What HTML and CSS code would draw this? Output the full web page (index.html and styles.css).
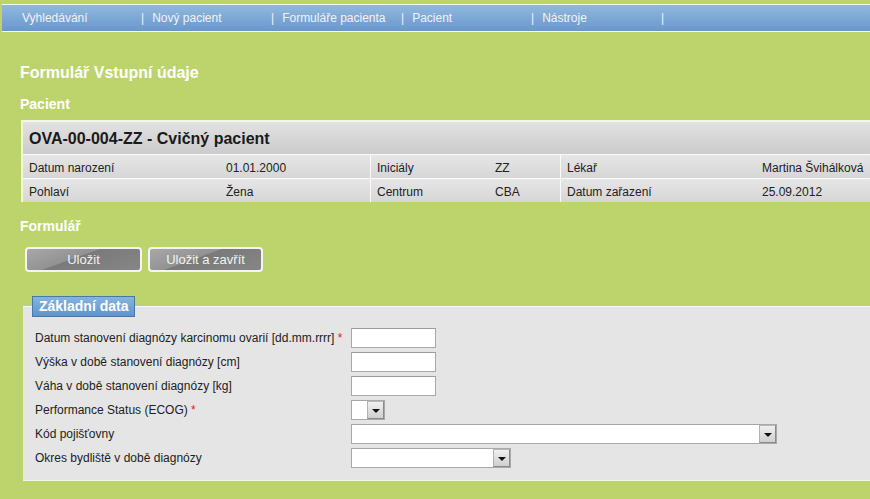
FILE: index.html
```html
<!DOCTYPE html>
<html lang="cs">
<head>
<meta charset="utf-8">
<title>Formulář Vstupní údaje</title>
<link rel="stylesheet" href="styles.css">
</head>
<body>
<nav class="nav">
  <span class="nav-item nav-first">Vyhledávání</span>
  <span class="nav-item"><span class="bar">|</span>Nový pacient</span>
  <span class="nav-item"><span class="bar">|</span>Formuláře pacienta</span>
  <span class="nav-item"><span class="bar">|</span>Pacient</span>
  <span class="nav-item"><span class="bar">|</span>Nástroje</span>
  <span class="nav-item"><span class="bar">|</span></span>
</nav>
<main class="page">
  <h1 class="title">Formulář Vstupní údaje</h1>
  <h2 class="section section-patient">Pacient</h2>
  <div class="patient">
    <div class="patient-head">OVA-00-004-ZZ - Cvičný pacient</div>
    <div class="patient-row">
      <span class="cell">Datum narození</span>
      <span class="cell">01.01.2000</span>
      <span class="cell sep">Iniciály</span>
      <span class="cell">ZZ</span>
      <span class="cell sep">Lékař</span>
      <span class="cell">Martina Švihálková</span>
    </div>
    <div class="patient-row">
      <span class="cell">Pohlaví</span>
      <span class="cell">Žena</span>
      <span class="cell sep">Centrum</span>
      <span class="cell">CBA</span>
      <span class="cell sep">Datum zařazení</span>
      <span class="cell">25.09.2012</span>
    </div>
  </div>
  <h2 class="section section-form">Formulář</h2>
  <div class="buttons">
    <button class="btn btn-save">Uložit</button>
    <button class="btn btn-close">Uložit a zavřít</button>
  </div>
  <fieldset class="box">
    <legend class="legend">Základní data</legend>
    <div class="row">
      <label class="label">Datum stanovení diagnózy karcinomu ovarií [dd.mm.rrrr] <span class="req">*</span></label>
      <span class="input"></span>
    </div>
    <div class="row">
      <label class="label">Výška v době stanovení diagnózy [cm]</label>
      <span class="input"></span>
    </div>
    <div class="row">
      <label class="label">Váha v době stanovení diagnózy [kg]</label>
      <span class="input"></span>
    </div>
    <div class="row">
      <label class="label">Performance Status (ECOG) <span class="req">*</span></label>
      <span class="select sel-xs"><span class="sel-btn"><span class="tri"></span></span></span>
    </div>
    <div class="row">
      <label class="label">Kód pojišťovny</label>
      <span class="select sel-lg"><span class="sel-btn"><span class="tri"></span></span></span>
    </div>
    <div class="row">
      <label class="label">Okres bydliště v době diagnózy</label>
      <span class="select sel-md"><span class="sel-btn"><span class="tri"></span></span></span>
    </div>
  </fieldset>
</main>
</body>
</html>
```

FILE: styles.css
```css
html, body {
  margin: 0;
  padding: 0;
}
body {
  background: #bdd36b;
  font-family: "Liberation Sans", Arial, sans-serif;
  font-size: 12px;
  color: #222;
  overflow: hidden;
  width: 870px;
  height: 499px;
}
.nav {
  display: flex;
  margin: 4px 0 0 2px;
  height: 26px;
  border-top: 1px solid #f4f8fc;
  border-bottom: 1px solid #f4f8fc;
  background: linear-gradient(#92b8de, #6898cb);
  padding-left: 9px;
}
.nav-item {
  width: 130px;
  flex: none;
  color: #eef3f9;
  font-size: 12px;
  line-height: 26px;
  white-space: nowrap;
}
.nav-first {
  padding-left: 11px;
  width: 119px;
}
.bar {
  margin-right: 8px;
}
.page {
  padding-left: 20px;
  width: 900px;
}
.title {
  margin: 31px 0 0 0;
  font-size: 16px;
  line-height: 20px;
  font-weight: bold;
  color: #fff;
}
.section {
  margin: 0;
  font-size: 14px;
  line-height: 16px;
  font-weight: bold;
  color: #fff;
}
.section-patient {
  margin-top: 13px;
}
.patient {
  margin: 8px 0 0 1px;
  width: 880px;
  border: 2px solid #f2f5e6;
  border-right: none;
  border-bottom: none;
  background: #dcdcdc;
}
.patient-head {
  height: 32px;
  line-height: 34px;
  padding-left: 6px;
  font-size: 16px;
  font-weight: bold;
  color: #1a1a1a;
  background: linear-gradient(#e2e2e2, #cbcbcb);
}
.patient-row {
  display: grid;
  grid-template-columns: 197px 150px 119px 71px 196px auto;
  border-top: 1px solid #fafafa;
  height: 23px;
  background: linear-gradient(#e6e6e6, #d6d6d6);
}
.cell {
  padding: 3px 0 0 6px;
  line-height: 20px;
  white-space: nowrap;
}
.sep {
  border-left: 1px solid #fafafa;
}
.section-form {
  margin-top: 16px;
}
.buttons {
  display: flex;
  gap: 6px;
  margin: 13px 0 0 5px;
}
.btn {
  height: 25px;
  box-sizing: border-box;
  border: 2px solid #f4f4f4;
  border-radius: 4px;
  background: linear-gradient(160deg, #a8a8a8 0%, #929292 42%, #7a7a7a 43%, #868686 100%);
  color: #f2f2f2;
  font-family: "Liberation Sans", Arial, sans-serif;
  font-size: 13px;
  padding: 0;
  line-height: 19px;
}
.btn-save { width: 117px; }
.btn-close { width: 115px; }
.box {
  margin: 24px 0 0 3px;
  width: 880px;
  padding: 9px 0 10px 12px;
  border: none;
  border-top: 1px solid #fbfbfb;
  border-bottom: 1px solid #f3f6e4;
  background: #e5e5e5;
  box-sizing: border-box;
}
.legend {
  margin-left: -3px;
  padding: 0 6px;
  height: 21px;
  line-height: 19px;
  box-sizing: border-box;
  border: 1px solid #4a78a6;
  background: linear-gradient(#84b4e2, #5f94cb);
  color: #fff;
  font-size: 14px;
  font-weight: bold;
  white-space: nowrap;
}
.row {
  display: flex;
  align-items: center;
  height: 24px;
}
.label {
  width: 316px;
  flex: none;
  white-space: nowrap;
  font-size: 12px;
  color: #222;
}
.req {
  color: #e02020;
}
.input {
  display: block;
  width: 85px;
  height: 20px;
  box-sizing: border-box;
  border: 1px solid #a9a9a9;
  border-top-color: #9a9a9a;
  background: #fff;
}
.select {
  display: flex;
  justify-content: flex-end;
  height: 20px;
  box-sizing: border-box;
  border: 1px solid #a9a9a9;
  background: #fff;
}
.sel-xs { width: 34px; }
.sel-lg { width: 426px; }
.sel-md { width: 160px; }
.sel-btn {
  display: flex;
  align-items: center;
  justify-content: center;
  width: 17px;
  height: 18px;
  box-sizing: border-box;
  border: 1px solid #8a8a8a;
  border-left-color: #b0b0b0;
  border-top-color: #b8b8b8;
  background: linear-gradient(#f0f0f0, #cfcfcf);
}
.tri {
  width: 0;
  height: 0;
  border-left: 4px solid transparent;
  border-right: 4px solid transparent;
  border-top: 4px solid #111;
  margin-top: 1px;
}
```
